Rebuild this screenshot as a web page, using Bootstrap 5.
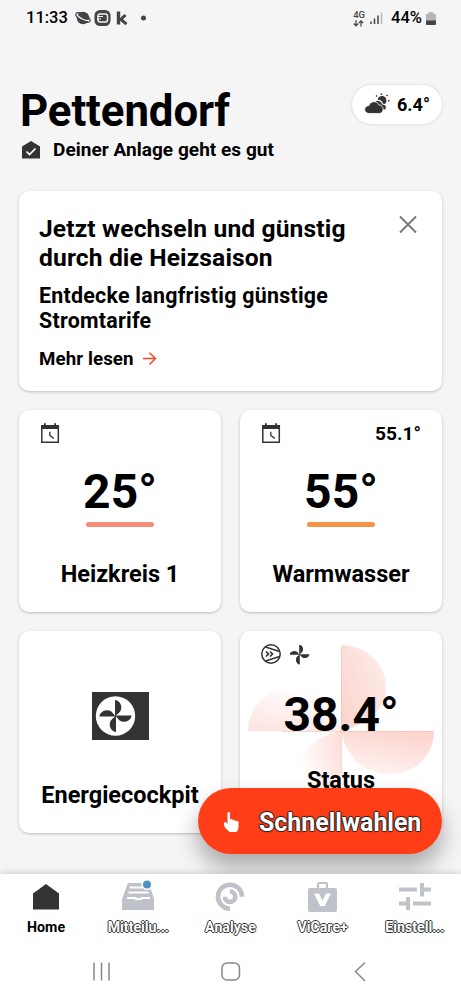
<!DOCTYPE html>
<html lang="de">
<head>
<meta charset="utf-8">
<meta name="viewport" content="width=device-width, initial-scale=1">
<title>Pettendorf</title>
<link href="https://cdn.jsdelivr.net/npm/bootstrap@5.3.0/dist/css/bootstrap.min.css" rel="stylesheet">
<style>
body{font-family:Roboto,"Liberation Sans",sans-serif;background:#f5f5f5;color:#000;font-weight:700;height:999px;overflow:hidden}
svg{display:block;flex:none}
.screen{width:461px;height:999px;overflow:hidden}
.status-bar{height:36px;padding:0 25px 0 26px;font-weight:500;font-size:16.5px;line-height:36px}
.net{font-size:9.5px;line-height:9px;font-weight:500;color:#444}
.page-head{height:154px;padding:49px 19px 0 20px}
.place{font-size:43.8px;line-height:48px;letter-spacing:-.1px;white-space:nowrap;padding-top:2px}
.state{font-size:19px;line-height:24px;margin-top:3px;letter-spacing:.04px;padding-left:1px}
.weather{width:90px;height:39px;font-size:18px;box-shadow:0 0 3px rgba(0,0,0,.16)}
.weather-value{margin-left:7px}
.state-text{margin-left:12px}
.panel{background:#fff;border-radius:10px;box-shadow:0 1px 3px rgba(0,0,0,.23)}
.promo{margin:1px 19px 0;height:200px;padding:24px 20px 0}
.promo-title{font-size:24.6px;line-height:29px;letter-spacing:.13px;margin-top:-1px}
.promo-text{font-size:21.4px;line-height:25px;margin-top:11px;letter-spacing:.25px}
.promo-link{font-size:18.7px;line-height:24px;margin-top:14px;letter-spacing:.1px}
.tiles{display:grid;grid-template-columns:202px 202px;grid-auto-rows:202px;gap:19px;margin:19px 19px 0}
.tile-top{height:48px;padding:0 21px 1px}
.reading{font-size:48px;line-height:58px;margin-top:5px;text-align:center}
.underbar{width:68px;height:5px;border-radius:3px;margin:1px auto 0}
.salmon{background:#f58b7b}.orange{background:#f39447}
.tile-name{font-size:23.5px;line-height:30px;text-align:center;white-space:nowrap}
.fan-bg{left:7px;top:13px}
.side-value{font-size:19.2px;padding-top:2px}
.cockpit{margin:61px 0 40px}
.wide-read{margin-top:7px}
.status-name{margin-top:21px}
.quick{left:198px;top:788px;width:244px;height:66px;border-radius:33px;background:#ff3e17;color:#fff;box-shadow:0 13px 22px 1px rgba(0,0,0,.3);padding-left:24px;z-index:2}
.quick-label{font-size:24.9px;line-height:34px;margin-left:18px;padding-top:3px;text-shadow:-1px 0 1px #222,1px 0 1px #222,0 -1px 1px #222,0 1px 1px #222}
.bottom{top:874px;left:0;width:461px;height:125px;background:#fff;box-shadow:0 -1px 7px rgba(0,0,0,.16);z-index:3}
.tab-item{width:92.2px;height:70px;padding-top:6px}
.tab-label{font-size:14.2px;line-height:18px;margin-top:4px}
.outlined{color:#fff;text-shadow:-1px 0 0 #333,1px 0 0 #333,0 -1px 0 #333,0 1px 0 #333}
.sysnav{height:56px}
</style>
</head>
<body>
<svg width="0" height="0" class="position-absolute" aria-hidden="true">
<defs>
<g id="calendar"><path d="M1.800 3h16.500v16.200H1.800z" fill="none" stroke="#333" stroke-width="1.500"/><path d="M1 2h18v4H1zM4 .2h1.800V3H4zM14.200 .2h1.800V3h-1.800z" fill="#333"/><path d="M9.800 8.700v3.800l4 2.900" fill="none" stroke="#333" stroke-width="1.300"/></g>
<path id="blade" d="M-.5 0V-16.500C3-16.500 6-12.500 6-9C6-5 4-3 .8-1L.5 0Z"/>
<g id="rotor"><use href="#blade"/><use href="#blade" transform="rotate(90)"/><use href="#blade" transform="rotate(180)"/><use href="#blade" transform="rotate(270)"/></g>
<linearGradient id="roseTop" x1="0" y1=".9" x2="1" y2=".2"><stop offset="0" stop-color="#fbd4cd"/><stop offset="1" stop-color="#fdebe8"/></linearGradient>
<linearGradient id="roseRight" x1=".2" y1="1" x2=".6" y2="0"><stop offset="0" stop-color="#fff4f2"/><stop offset="1" stop-color="#fcd5ce"/></linearGradient>
<linearGradient id="roseLeft" x1=".1" y1="1" x2=".55" y2="0"><stop offset="0" stop-color="#fde3df"/><stop offset="1" stop-color="#fff"/></linearGradient>
<linearGradient id="roseBottom" x1="1" y1=".25" x2=".15" y2=".55"><stop offset="0" stop-color="#fde0db"/><stop offset="1" stop-color="#fff"/></linearGradient>
</defs>
</svg>
<div class="screen position-relative">
<div class="status-bar d-flex align-items-center justify-content-between">
  <div class="d-flex align-items-center"><span>11:33</span>
    <svg width="78" height="18" viewBox="-7 0 78 18"><circle cx="8" cy="9" r="6.200" fill="#444"/><path d="M1.500 5.500C4 9 10 12 14.500 11.500" stroke="#f5f5f5" stroke-width="1.300" fill="none"/><ellipse cx="8" cy="8.500" rx="8" ry="3.400" transform="rotate(28 8 8.500)" fill="none" stroke="#444" stroke-width="1.200"/><rect x="19.500" y="1" width="16" height="16" rx="5.500" fill="#444"/><rect x="23" y="5" width="9.500" height="8" rx="2" fill="none" stroke="#f5f5f5" stroke-width="1.400"/><path d="M22 7.500h6M22 10h4" stroke="#f5f5f5" stroke-width="1.200"/><path d="M43.500 2.500V15.500" stroke="#444" stroke-width="3.400"/><path d="M50.500 6L45.800 10.500L51.500 15.200" fill="none" stroke="#444" stroke-width="3"/><circle cx="68.500" cy="9" r="2.500" fill="#444"/></svg>
  </div>
  <div class="d-flex align-items-center">
    <div class="net"><div>4G</div><svg width="11" height="8" viewBox="0 0 11 8"><path d="M3 1v5.500M.8 4.500L3 6.800L5.200 4.500M8 7.500V2M5.800 4L8 1.800L10.200 4" fill="none" stroke="#444" stroke-width="1.200"/></svg></div>
    <svg class="ms-1" width="14" height="13" viewBox="0 0 14 13"><path d="M2 9.500v2.500M5.500 6.500V12M9 3.500V12" stroke="#444" stroke-width="1.500"/><path d="M12.500 .5V12" stroke="#bbb" stroke-width="1.500"/></svg>
    <span class="mx-1 ps-1">44%</span>
    <svg width="10" height="13" viewBox="0 0 10 13"><path d="M3 0h4v1.500h1.500Q10 1.500 10 3V13H0V3Q0 1.500 1.500 1.500H3z" fill="#b5b5b5"/><path d="M0 8.500h10v3a1.500 1.500 0 0 1-1.500 1.500h-7A1.500 1.500 0 0 1 0 11.500z" fill="#444"/></svg>
  </div>
</div>
<header class="page-head">
  <div class="d-flex justify-content-between">
    <div class="place">Pettendorf</div>
    <div class="weather bg-white rounded-pill d-flex align-items-center justify-content-center">
      <svg width="26" height="23" viewBox="0 0 26 23"><circle cx="18" cy="7.500" r="4.500" fill="#333"/><path d="M17.300 2V.5M13 3.500l-1-1M22.500 3l1-1M24 7.700h1.500" stroke="#333" stroke-width="1.500"/><path d="M11 8C14 6 18 8 18.500 11C22 11 23.500 14 21.500 17H14Z" fill="#333" stroke="#fff" stroke-width="1.100"/><path d="M5.500 20.500C-.8 20.500-1 13 5 12.500C6 7.500 13.500 7.500 15 12C20.500 12 20.500 20.500 15 20.500Z" fill="#333" stroke="#fff" stroke-width=".8"/></svg>
      <span class="weather-value">6.4°</span>
    </div>
  </div>
  <div class="state d-flex align-items-center"><svg width="20" height="19" viewBox="0 0 20 19"><path d="M1 17.500V5.500L10 0L19 5.500v12z" fill="#333"/><path d="M5.500 10.500l3 3L14.500 7.500" fill="none" stroke="#fff" stroke-width="1.700"/></svg><span class="state-text">Deiner Anlage geht es gut</span></div>
</header>
<section class="panel promo">
  <div class="d-flex justify-content-between align-items-start">
    <div class="promo-title text-nowrap">Jetzt wechseln und günstig<br>durch die Heizsaison</div>
    <svg width="28" height="20" viewBox="0 0 28 20"><path d="M6 1.500l16 16M22 1.500L6 17.500" stroke="#777" stroke-width="1.900" fill="none"/></svg>
  </div>
  <div class="promo-text">Entdecke langfristig günstige<br>Stromtarife</div>
  <div class="promo-link d-flex align-items-center">Mehr lesen<svg class="ms-2" width="16" height="14" viewBox="0 0 16 14"><path d="M1 6.500h12.500M7.500 .8l6 5.700l-6 6" fill="none" stroke="#f04a2a" stroke-width="1.500"/></svg></div>
</section>
<main class="tiles">
  <section class="panel">
    <div class="tile-top d-flex align-items-center"><svg width="20" height="21"><use href="#calendar"/></svg></div>
    <div class="reading">25°</div><div class="underbar salmon"></div><div class="tile-name mt-4 pt-2">Heizkreis 1</div>
  </section>
  <section class="panel">
    <div class="tile-top d-flex align-items-center justify-content-between"><svg width="20" height="21"><use href="#calendar"/></svg><span class="side-value">55.1°</span></div>
    <div class="reading">55°</div><div class="underbar orange"></div><div class="tile-name mt-4 pt-2">Warmwasser</div>
  </section>
  <section class="panel d-flex flex-column align-items-center">
    <svg class="cockpit" width="57" height="48" viewBox="0 0 57 48"><path fill="#333" d="M0 0h57v48H0z"/><circle cx="23.500" cy="24" r="19.700" fill="#fff"/><use href="#rotor" transform="translate(23.500 24) scale(.97)" fill="#333"/></svg>
    <div class="tile-name">Energiecockpit</div>
  </section>
  <section class="panel position-relative">
    <svg class="fan-bg position-absolute" width="190" height="176" viewBox="0 0 190 176"><path d="M94 87V1C118 1 139 20 139 43C139 66 120 80 94 87Z" fill="url(#roseTop)"/><path d="M94 87H187C187 112 167 130 143 130C117 130 99 113 94 87Z" fill="url(#roseRight)"/><path d="M94 87H1C2 61 21 43 46 43C72 43 90 60 94 87Z" fill="url(#roseLeft)"/><path d="M94 87V174C69 174 49 157 49 133C49 108 69 92 94 87Z" fill="url(#roseBottom)"/><path d="M94.500 5V130M35 87.500H186" stroke="#f3b9b0" stroke-width=".7" opacity=".8"/></svg>
    <div class="tile-top d-flex align-items-center gap-2 position-relative"><svg width="21" height="21" viewBox="0 0 21 21"><g fill="none" stroke="#333" stroke-width="1.500"><circle cx="10" cy="10" r="9.200"/><path d="M4.500 3L18.500 7.500M4.500 17L18.500 12.500"/><path d="M5 7.500l2.500 2.500L5 12.500M9 7.500l2.500 2.500L9 12.500" stroke-width="1.700"/></g></svg><svg width="20" height="20" viewBox="-10 -10 20 20"><use href="#rotor" transform="translate(-.5 -.5) scale(.6)" fill="#333"/></svg></div>
    <div class="reading position-relative wide-read">38.4°</div>
    <div class="tile-name position-relative status-name">Status</div>
  </section>
</main>
<button class="quick btn position-absolute border-0 d-flex align-items-center"><svg width="19" height="24" viewBox="0 0 19 24"><path d="M5.500 14V3.200Q5.500 2 6.700 2T8 3.200V9.500Q9.300 7.800 10.500 9.500V10.500Q12 8.800 13.200 10.500V11.500Q15.500 10 16.500 12V17Q16.500 20 14.500 22H7.500L3 17.500Q1.500 15.500 2 12.500Q4.500 11.500 5.500 14Z" fill="#fff" transform="translate(0 1)"/></svg><span class="quick-label fw-bold">Schnellwahlen</span></button>
<footer class="bottom position-absolute">
  <nav class="d-flex text-center">
    <div class="tab-item d-flex flex-column align-items-center"><svg width="32" height="34" viewBox="0 0 32 34"><path d="M3 29.500V13.500L16 4L29 13.500v16z" fill="#333"/></svg><div class="tab-label">Home</div></div>
    <div class="tab-item d-flex flex-column align-items-center"><svg width="34" height="34" viewBox="0 0 34 34"><path d="M7 3h21l5 16v11H1V19z" fill="#bfc2c9"/><path d="M8.500 7.500h17M7.500 12.500h20M6 18h8l1 1h5l1-1h8" fill="none" stroke="#fff" stroke-width="2.200"/><circle cx="26" cy="4.500" r="5.500" fill="#fff"/><circle cx="26" cy="4.500" r="4" fill="#4b91c3"/></svg><div class="tab-label outlined">Mitteilu...</div></div>
    <div class="tab-item d-flex flex-column align-items-center"><svg width="34" height="34" viewBox="0 0 34 34"><g fill="none" stroke="#bfc2c9"><path d="M29 16.700A12 12 0 1 0 17 28.700" stroke-width="4.600"/><path d="M17 11.500A5.200 5.200 0 1 1 11.800 16.700" stroke-width="4.600"/></g></svg><div class="tab-label outlined">Analyse</div></div>
    <div class="tab-item d-flex flex-column align-items-center"><svg width="32" height="34" viewBox="0 0 32 34"><path d="M11 9V4.500q0-1.500 1.500-1.500h6q1.500 0 1.500 1.500V9" fill="none" stroke="#bfc2c9" stroke-width="2.200"/><rect x="1" y="8" width="29" height="24" rx="2" fill="#bfc2c9"/><path d="M7 13.500h5l3.500 7.500L19 13.500h5L17.700 26h-4.500z" fill="#fff"/></svg><div class="tab-label outlined">ViCare+</div></div>
    <div class="tab-item d-flex flex-column align-items-center"><svg width="34" height="34" viewBox="0 0 34 34"><path d="M1 9.500h18M24 9.500h9M24 3v13.500M1 23.500h9M15 23.500h18M10 17v13" stroke="#bfc2c9" stroke-width="4" fill="none"/></svg><div class="tab-label outlined">Einstell...</div></div>
  </nav>
  <div class="sysnav d-flex align-items-center justify-content-center"><svg width="282" height="22" viewBox="0 0 282 22"><g fill="none" stroke="#888" stroke-width="1.500"><path d="M4 1.500v18M11.500 1.500v18M19 1.500v18M275 1.500l-9.500 9L275 20"/><rect x="132" y="2" width="17.500" height="17" rx="5"/></g></svg></div>
</footer>
</div>
<script src="https://cdn.jsdelivr.net/npm/bootstrap@5.3.0/dist/js/bootstrap.bundle.min.js"></script>
</body>
</html>
